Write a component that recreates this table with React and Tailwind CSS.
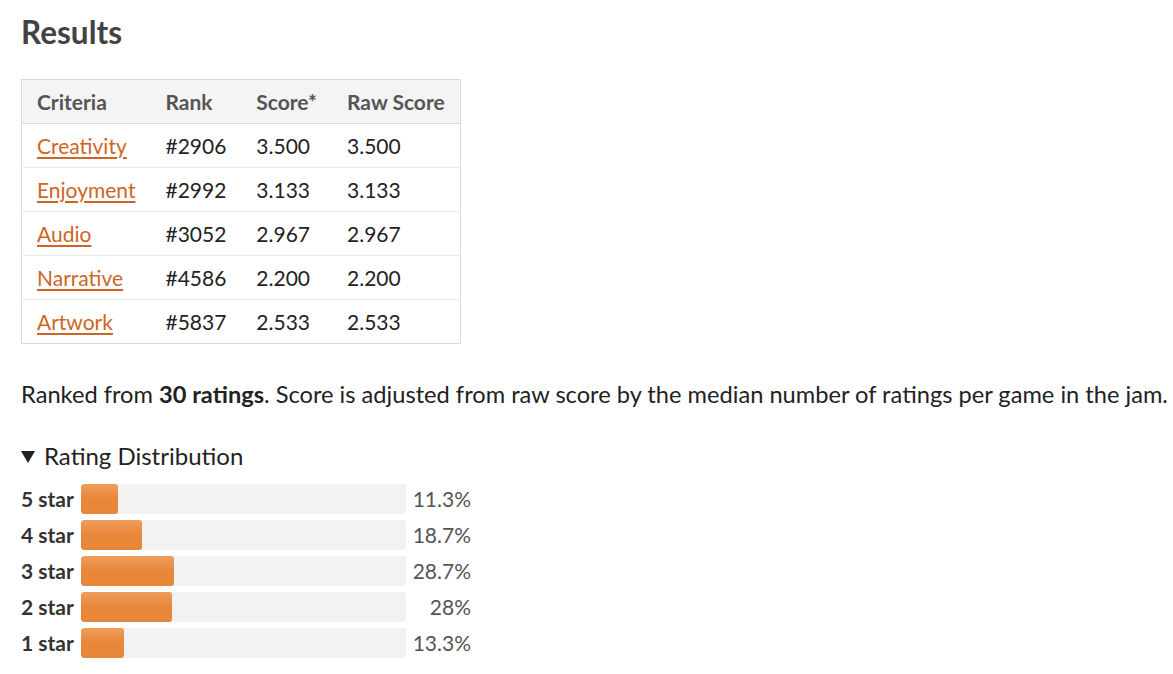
import React from "react";

const rows = [
  ["Creativity", "#2906", "3.500", "3.500"],
  ["Enjoyment", "#2992", "3.133", "3.133"],
  ["Audio", "#3052", "2.967", "2.967"],
  ["Narrative", "#4586", "2.200", "2.200"],
  ["Artwork", "#5837", "2.533", "2.533"],
];

const dist = [
  ["5 star", 11.3, "11.3%"],
  ["4 star", 18.7, "18.7%"],
  ["3 star", 28.7, "28.7%"],
  ["2 star", 28, "28%"],
  ["1 star", 13.3, "13.3%"],
];

export default function App() {
  return (
    <div
      className="bg-white min-h-[674px] px-[21px] pt-[12px] text-[#222]"
      style={{ fontFamily: "Lato, 'Liberation Sans', sans-serif" }}
    >
      <h2 className="text-[31.5px] font-bold leading-[40px] text-[#434343] m-0">Results</h2>
      <table className="mt-[27px] border border-[#dadada] border-collapse text-[21px]">
        <thead>
          <tr className="bg-[#f4f4f4] h-[44px]">
            <th className="text-left font-bold text-[#555] px-[15px] border-b border-[#dadada]">Criteria</th>
            <th className="text-left font-bold text-[#555] px-[15px] border-b border-[#dadada]">Rank</th>
            <th className="text-left font-bold text-[#555] px-[15px] border-b border-[#dadada]">Score*</th>
            <th className="text-left font-bold text-[#555] px-[15px] border-b border-[#dadada]">Raw Score</th>
          </tr>
        </thead>
        <tbody>
          {rows.map((r, i) => (
            <tr key={r[0]} className={"h-[44px]" + (i < rows.length - 1 ? " border-b border-[#ececec]" : "")}>
              <td className="px-[15px]">
                <a href="#" className="text-[#cd6524] underline decoration-[2px] underline-offset-[3px]">{r[0]}</a>
              </td>
              <td className="px-[15px]">{r[1]}</td>
              <td className="px-[15px]">{r[2]}</td>
              <td className="px-[15px]">{r[3]}</td>
            </tr>
          ))}
        </tbody>
      </table>
      <p className="mt-[34px] text-[23.65px] leading-[32px] m-0 whitespace-nowrap -mr-[21px]">
        Ranked from <strong>30 ratings</strong>. Score is adjusted from raw score by the median number of ratings per game in the jam.
      </p>
      <div className="mt-[30px] flex items-center text-[24px] leading-[32px] text-[#222]">
        <svg width="14" height="12" viewBox="0 0 14 12" className="mr-[9px] mt-[1px]">
          <polygon points="0,0 14,0 7,12" fill="#222" />
        </svg>
        <span>Rating Distribution</span>
      </div>
      <div className="mt-[12px] flex flex-col gap-[6px]">
        {dist.map(([label, pct, txt]) => (
          <div key={label} className="flex items-center h-[30px]">
            <span className="w-[60px] text-[21px] font-bold text-[#333]">{label}</span>
            <div className="w-[325px] h-[30px] bg-[#f2f2f2] rounded-[3px] overflow-hidden">
              <div
                className="h-full rounded-[3px] bg-gradient-to-b from-[#ee9d5c] via-[#e8873a] to-[#e8873a]"
                style={{ width: pct + "%" }}
              />
            </div>
            <span className="w-[65px] text-right text-[21px] text-[#555]">{txt}</span>
          </div>
        ))}
      </div>
    </div>
  );
}
